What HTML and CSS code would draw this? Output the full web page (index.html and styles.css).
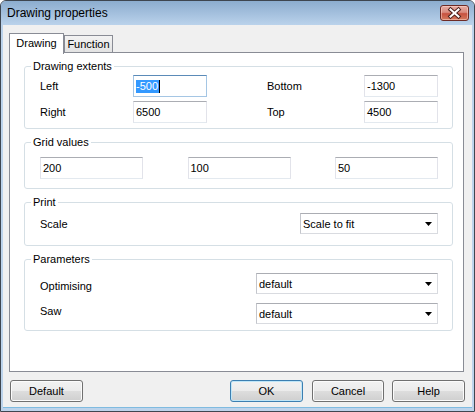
FILE: index.html
```html
<!DOCTYPE html>
<html lang="en">
<head>
  <meta charset="UTF-8">
  <title>Drawing properties</title>
  <link rel="stylesheet" href="styles.css">
</head>
<body>
  <div class="window">
    <div class="titlebar">
      <span class="title">Drawing properties</span>
      <div class="close">
        <svg width="27" height="14" viewBox="0 0 27 14">
          <path d="M9.5 3.5 L17.5 10.5 M17.5 3.5 L9.5 10.5" stroke="#4a1f1a" stroke-width="4" stroke-linecap="square"/>
          <path d="M9.5 3.5 L17.5 10.5 M17.5 3.5 L9.5 10.5" stroke="#ffffff" stroke-width="2" stroke-linecap="square"/>
        </svg>
      </div>
    </div>

    <div class="client">
      <div class="tabs">
        <div class="tab active">Drawing</div>
        <div class="tab">Function</div>
      </div>

      <div class="panel">
        <fieldset class="group extents">
          <legend>Drawing extents</legend>
          <div class="extents-grid">
            <span class="label">Left</span>
            <div class="edit focus"><span class="sel">-500</span></div>
            <span></span>
            <span class="label">Bottom</span>
            <div class="edit">-1300</div>
            <span class="label">Right</span>
            <div class="edit">6500</div>
            <span></span>
            <span class="label">Top</span>
            <div class="edit">4500</div>
          </div>
        </fieldset>

        <fieldset class="group grid-values">
          <legend>Grid values</legend>
          <div class="grid-row">
            <div class="edit wide">200</div>
            <div class="edit wide">100</div>
            <div class="edit wide">50</div>
          </div>
        </fieldset>

        <fieldset class="group print">
          <legend>Print</legend>
          <div class="row">
            <span class="label">Scale</span>
            <div class="combo scale">
              <span>Scale to fit</span>
              <svg class="arrow" width="7" height="4" viewBox="0 0 7 4"><polygon points="0,0 7,0 3.5,4" fill="#000"/></svg>
            </div>
          </div>
        </fieldset>

        <fieldset class="group params">
          <legend>Parameters</legend>
          <div class="row">
            <span class="label opt">Optimising</span>
            <div class="combo param">
              <span>default</span>
              <svg class="arrow" width="7" height="4" viewBox="0 0 7 4"><polygon points="0,0 7,0 3.5,4" fill="#000"/></svg>
            </div>
          </div>
          <div class="row saw">
            <span class="label">Saw</span>
            <div class="combo param">
              <span>default</span>
              <svg class="arrow" width="7" height="4" viewBox="0 0 7 4"><polygon points="0,0 7,0 3.5,4" fill="#000"/></svg>
            </div>
          </div>
        </fieldset>
      </div>

      <div class="buttons">
        <div class="btn">Default</div>
        <div class="spacer"></div>
        <div class="btn default">OK</div>
        <div class="btn cancel">Cancel</div>
        <div class="btn help">Help</div>
      </div>
    </div>
  </div>
</body>
</html>
```

FILE: styles.css
```css
* {
  box-sizing: border-box;
}

html, body {
  margin: 0;
  padding: 0;
  background: #ffffff;
}

body {
  font-family: "Liberation Sans", Arial, sans-serif;
  font-size: 11px;
  color: #000000;
}

.window {
  width: 475px;
  height: 412px;
  display: flex;
  flex-direction: column;
  border: 1px solid #3e4650;
  border-radius: 6px 6px 0 0;
  background: #bcd3eb;
  overflow: hidden;
}

.titlebar {
  height: 24px;
  display: flex;
  align-items: flex-start;
  padding: 0 5px 0 6px;
  background: linear-gradient(to bottom, #8cadcf, #bad2eb);
}

.title {
  flex: 1;
  font-size: 12px;
  line-height: 24px;
}

.close {
  width: 29px;
  height: 16px;
  margin-top: 4px;
  border: 1px solid #6e2b25;
  border-radius: 3px;
  background: linear-gradient(to bottom, #e7aca3 0%, #d98b7e 45%, #c7513f 55%, #d47a5e 100%);
  box-shadow: inset 0 0 0 1px rgba(255, 220, 210, 0.5);
}

.close svg {
  display: block;
}

.client {
  flex: 1;
  margin: 0 2px 3px;
  padding: 7px 8px 0 6px;
  background: #f0f0f0;
  border-bottom: 1px solid #7fbbe0;
}

.tabs {
  display: flex;
  align-items: flex-end;
  height: 21px;
}

.tab {
  height: 17px;
  width: 49px;
  margin-bottom: 1px;
  padding-top: 2px;
  text-align: center;
  border: 1px solid #898c95;
  border-bottom: none;
  background: linear-gradient(to bottom, #f3f3f3, #e3e3e3);
}

.tab.active {
  position: relative;
  z-index: 1;
  width: 55px;
  height: 21px;
  margin-bottom: -1px;
  padding-top: 3px;
  background: #ffffff;
}

.panel {
  height: 320px;
  margin-top: -1px;
  padding: 7px 10px 0 14px;
  border: 1px solid #898c95;
  background: #ffffff;
}

.group {
  margin: 0 0 7px;
  min-width: 0;
  border: 1px solid #d5dfe5;
  border-radius: 3px;
}

.group legend {
  padding: 0 2px;
  margin-left: -9px;
  line-height: 13px;
}

.extents {
  padding: 2px 14px 5px 15px;
}

.grid-values {
  padding: 8px 14px 9px 15px;
}

.print {
  padding: 4px 14px 11px 15px;
}

.params {
  padding: 7px 14px 6px 15px;
}

.extents-grid {
  display: grid;
  grid-template-columns: 93px 74px 60px 97px 74px;
  grid-auto-rows: 22px;
  row-gap: 4px;
  align-items: center;
}

.grid-row {
  display: flex;
  justify-content: space-between;
}

.row {
  display: flex;
  justify-content: space-between;
  align-items: center;
}

.row.saw {
  margin-top: 9px;
}

.label.opt {
  margin-top: 4px;
}

.row.saw .label {
  margin-top: -5px;
}

.edit {
  height: 22px;
  padding: 0 2px;
  line-height: 20px;
  background: #ffffff;
  border: 1px solid #e2e3ea;
  border-top-color: #abadb3;
  border-bottom-color: #e3e9ef;
}

.edit.wide {
  width: 103px;
}

.edit.focus {
  border-color: #a5c6e4;
  border-top-color: #5b8bb8;
}

.sel {
  display: inline-block;
  line-height: 13px;
  padding-right: 1px;
  color: #ffffff;
  background: #3399ff;
  border-right: 1px solid #000000;
}

.combo {
  height: 21px;
  display: flex;
  align-items: center;
  justify-content: space-between;
  padding: 0 5px 0 2px;
  background: #ffffff;
  border: 1px solid #d9dbe0;
  border-top-color: #abadb3;
  border-left-color: #c4c6cc;
}

.combo.scale {
  width: 138px;
}

.combo.param {
  width: 182px;
}

.arrow {
  display: block;
}

.buttons {
  display: flex;
  margin: 8px -1px 0 1px;
}

.spacer {
  flex: 1;
}

.btn {
  width: 73px;
  height: 22px;
  line-height: 20px;
  text-align: center;
  border: 1px solid #707070;
  border-radius: 3px;
  background: linear-gradient(to bottom, #f2f2f2 0%, #ebebeb 50%, #dddddd 51%, #cfcfcf 100%);
  box-shadow: inset 0 0 0 1px #fbfbfb;
}

.btn.default {
  border-color: #3c7fb1;
  box-shadow: inset 0 0 0 1px #bfe6f8;
}

.btn.cancel {
  width: 72px;
  margin-left: 9px;
}

.btn.help {
  margin-left: 8px;
}
```
